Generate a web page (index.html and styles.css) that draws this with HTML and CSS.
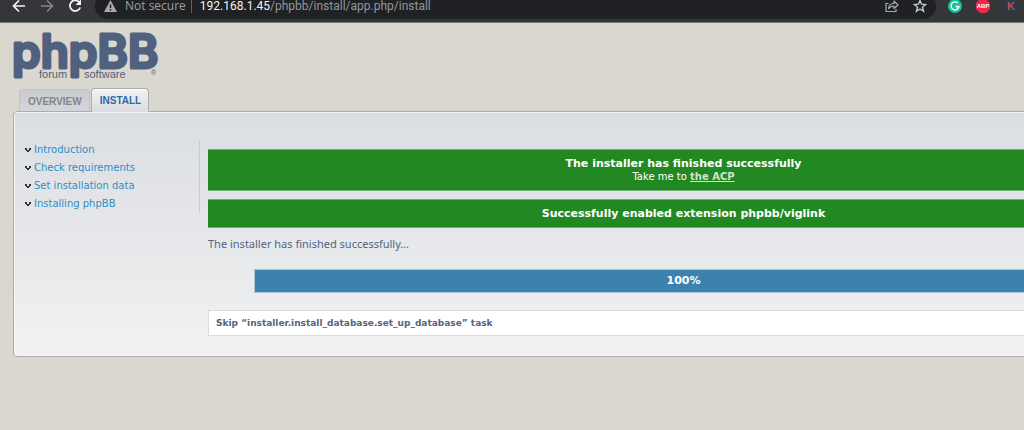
FILE: index.html
```html
<!DOCTYPE html>
<html lang="en">
<head>
<meta charset="utf-8">
<title>Install phpBB</title>
<link rel="stylesheet" href="styles.css">
</head>
<body>
<header class="browser">
  <nav class="history">
    <button class="tool" aria-label="Back"><svg width="14" height="14" viewBox="0 0 14 14"><path d="M13 7H2M7 1.500L1.500 7L7 12.500" fill="none" stroke="#f1f3f4" stroke-width="1.700"/></svg></button>
    <button class="tool" aria-label="Forward"><svg width="14" height="14" viewBox="0 0 14 14"><path d="M1 7H12M7 1.500L12.500 7L7 12.500" fill="none" stroke="#85878b" stroke-width="1.500"/></svg></button>
    <button class="tool" aria-label="Reload"><svg width="14" height="14" viewBox="0 0 14 14"><path d="M11.500 3.500A5.300 5.300 0 1 0 12.200 8.500" fill="none" stroke="#f1f3f4" stroke-width="1.800"/><path d="M13 0.500V6H7.500Z" fill="#f1f3f4"/></svg></button>
  </nav>
  <div class="address">
    <svg width="13" height="12" viewBox="0 0 13 12"><path d="M6.500 0L13 12H0Z" fill="#a6a9ad"/><path d="M6.500 4.500V8M6.500 9V10.500" stroke="#202124" stroke-width="1.500"/></svg>
    <span class="security">Not secure</span>
    <span class="url"><span class="host">192.168.1.45</span>/phpbb/install/app.php/install</span>
    <button class="tool" aria-label="Share"><svg width="14" height="14" viewBox="0 0 14 14"><path d="M3.500 4.500H1V12.500H11V10" fill="none" stroke="#a6a9ad" stroke-width="1.200"/><path d="M3.500 9.500C4 6 6 4.500 9 4.500V2L13 6L9 9.500V7.200C6.500 7.200 5 7.800 3.500 9.500Z" fill="none" stroke="#a6a9ad" stroke-width="1.200" stroke-linejoin="round"/></svg></button>
    <button class="tool" aria-label="Bookmark"><svg width="14" height="14" viewBox="0 0 14 14"><path d="M7 1.500L8.500 5.200L12.600 5.500L9.500 8.200L10.500 12.200L7 10L3.500 12.200L4.500 8.200L1.400 5.500L5.500 5.200Z" fill="none" stroke="#c4c7ca" stroke-width="1.400"/></svg></button>
  </div>
  <div class="extensions">
    <button class="tool" aria-label="Grammar checker"><svg width="14" height="14" viewBox="0 0 14 14"><circle cx="7" cy="7" r="7" fill="#15c39a"/><path d="M9.800 4A4 4 0 1 0 11 7.500H7.500M11 7.500L9.500 9.500" fill="none" stroke="#fff" stroke-width="1.300"/></svg></button>
    <button class="tool" aria-label="Ad blocker"><svg width="14" height="14" viewBox="0 0 14 14"><path d="M4 0H10L14 4V10L10 14H4L0 10V4Z" fill="#f0264b"/><text class="abp" x="7" y="9" text-anchor="middle">ABP</text></svg></button>
    <button class="tool" aria-label="K extension"><svg width="14" height="14" viewBox="0 0 14 14"><circle cx="7" cy="7" r="7" fill="#2b394b"/><text class="k" x="7" y="11" text-anchor="middle">K</text></svg></button>
  </div>
</header>
<div class="page">
  <a class="logo" href="#" aria-label="phpBB forum software">
    <svg width="150" height="52" viewBox="0 0 150 52">
      <text class="mark" x="-1" y="38">phpBB</text>
      <text class="tag" x="26" y="48">forum</text>
      <text class="tag" x="71" y="48">software</text>
      <text class="reg" x="138" y="45">®</text>
    </svg>
  </a>
  <nav class="tabs">
    <a class="tab" href="#">OVERVIEW</a>
    <a class="tab active" href="#">INSTALL</a>
  </nav>
  <div class="panel">
    <nav class="menu">
      <a href="#"><svg width="6" height="5" viewBox="0 0 6 5"><path d="M0 0H2V1H4V0H6V2H5V3H4V4H2V3H1V2H0Z" fill="#333"/><path d="M2 1H4V2H2Z" fill="#dfe1e4"/></svg>Introduction</a>
      <a href="#"><svg width="6" height="5" viewBox="0 0 6 5"><path d="M0 0H2V1H4V0H6V2H5V3H4V4H2V3H1V2H0Z" fill="#333"/><path d="M2 1H4V2H2Z" fill="#dfe1e4"/></svg>Check requirements</a>
      <a href="#"><svg width="6" height="5" viewBox="0 0 6 5"><path d="M0 0H2V1H4V0H6V2H5V3H4V4H2V3H1V2H0Z" fill="#333"/><path d="M2 1H4V2H2Z" fill="#dfe1e4"/></svg>Set installation data</a>
      <a href="#"><svg width="6" height="5" viewBox="0 0 6 5"><path d="M0 0H2V1H4V0H6V2H5V3H4V4H2V3H1V2H0Z" fill="#333"/><path d="M2 1H4V2H2Z" fill="#dfe1e4"/></svg>Installing phpBB</a>
    </nav>
    <main class="main">
      <div class="success"><strong>The installer has finished successfully</strong><span>Take me to <a href="#">the ACP</a></span></div>
      <div class="success"><strong>Successfully enabled extension phpbb/viglink</strong></div>
      <p class="status">The installer has finished successfully…</p>
      <div class="progress" role="progressbar" aria-label="Installation progress" aria-valuenow="100">100%</div>
      <div class="log">Skip “installer.install_database.set_up_database” task</div>
    </main>
  </div>
</div>
</body>
</html>
```
FILE: styles.css
```css
* { box-sizing: border-box; }
html { background: #dad7cf; }
body {
  margin: 0;
  overflow: hidden;
  color: #536482;
  font-family: "DejaVu Sans", Verdana, sans-serif;
  font-size: 10px;
}
a { text-decoration: none; }
svg { display: block; flex: none; }

/* Browser toolbar */
.browser {
  display: flex;
  align-items: center;
  height: 33px;
  margin-top: -10px;
  padding: 0 6px 1px 12px;
  background: #35363a;
  border-bottom: 1px solid #77777a;
  font: 12px "Open Sans", "Noto Sans", sans-serif;
}
.tool { padding: 0; border: 0; background: none; }
.history { display: flex; gap: 14px; }
.address {
  display: flex;
  flex: 1;
  align-items: center;
  gap: 14px;
  height: 26px;
  margin-left: 13px;
  padding: 0 9px;
  border-radius: 13px;
  background: #202124;
  color: #9aa0a6;
}
.security { margin-left: -6px; padding-right: 5px; border-right: 1px solid #5f6368; line-height: 14px; }
.url { flex: 1; margin-left: -6px; color: #92969b; font-family: Roboto, sans-serif; }
.host { color: #f1f3f4; }
.extensions { display: flex; gap: 14px; margin-left: 12px; }
.abp { fill: #fff; font: bold 6px "Liberation Sans", sans-serif; }
.k { fill: #bd5049; font: bold 11px "Liberation Sans", sans-serif; }

/* Page header */
.page { padding: 7px 0 0 13px; }
.logo { display: block; }
.mark {
  fill: #50607f;
  stroke: #50607f;
  stroke-width: 3px;
  stroke-linejoin: round;
  font: 600 46px Inter, sans-serif;
}
.tag { fill: #50607f; font: 11px "Liberation Sans", sans-serif; }
.reg { fill: #50607f; font: 7px "Liberation Sans", sans-serif; }
.tabs { display: flex; align-items: flex-end; gap: 1px; height: 29px; padding-left: 6px; }
.tab {
  height: 22px;
  padding: 0 7px 0 8px;
  border: 1px solid #c2c1c3;
  border-bottom: 0;
  border-radius: 4px 4px 0 0;
  background: linear-gradient(#c9cacf, #d5d6d9);
  color: #83858b;
  font: bold 10px/24px "Liberation Sans", Arial, sans-serif;
}
.tab.active {
  position: relative;
  height: 24px;
  margin-bottom: -1px;
  border-color: #adacad;
  background: linear-gradient(#f1f1f2, #dadde2);
  box-shadow: inset 0 1px #fff;
  color: #2b6ba8;
}

/* Panel runs past the right edge of the window */
.panel {
  display: flex;
  width: calc(100% + 148px);
  padding: 28px 12px 20px 11px;
  border: 1px solid #adacad;
  border-radius: 4px;
  background: linear-gradient(#dadde2, #f2f2f2);
  box-shadow: inset 0 0 0 1px #f5f5f6;
}
.menu {
  display: flex;
  flex-direction: column;
  width: 175px;
  height: 72px;
  margin-right: 8px;
  padding-top: 1px;
  border-right: 1px solid #c8ccd1;
}
.menu a { display: flex; align-items: center; gap: 3px; color: #308dc4; line-height: 18px; }
.main { flex: 1; padding-top: 9px; }
.success {
  margin-bottom: 8px;
  padding: 7px;
  border: solid #70ac75;
  border-width: 1px 0;
  background: #228822;
  color: #fff;
  text-align: center;
}
.success strong { display: block; font-size: 11px; line-height: 13px; }
.success span { display: block; line-height: 13px; }
.success a { color: #d3e3ce; font-weight: bold; text-decoration: underline; }
.status { margin: 0; font: 11px/15px "Noto Sans", sans-serif; }
.progress {
  margin: 18px 46px 17px;
  border: 1px solid #afc4d0;
  background: #3c82ae;
  color: #fff;
  font-size: 11px;
  font-weight: bold;
  line-height: 22px;
  text-align: center;
}
.log {
  padding: 0 7px;
  border: 1px solid #dedbd8;
  background: #fff;
  font-size: 9px;
  font-weight: bold;
  line-height: 24px;
}
```
